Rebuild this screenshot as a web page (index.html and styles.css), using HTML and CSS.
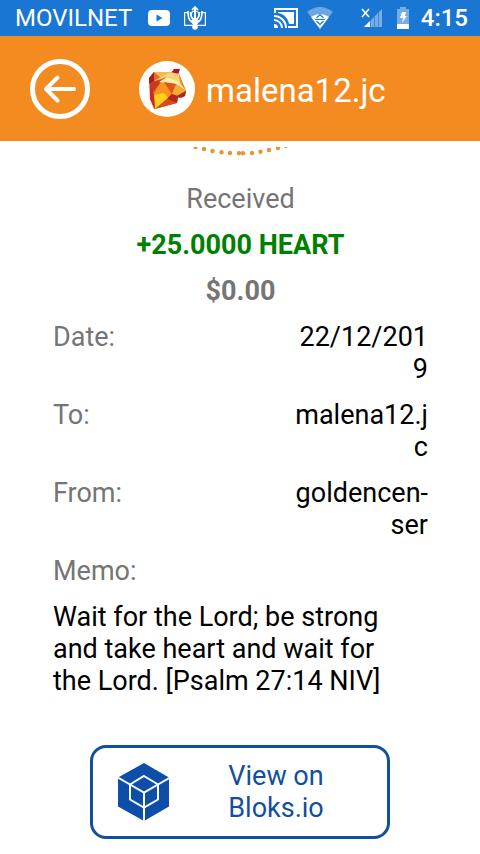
FILE: index.html
```html
<!DOCTYPE html>
<html lang="en">
<head>
<meta charset="utf-8">
<meta name="viewport" content="width=device-width, initial-scale=1">
<title>Transaction details</title>
<link rel="stylesheet" href="styles.css">
</head>
<body>
<div class="status">
  <span class="carrier">MOVILNET</span>
  <svg class="youtube" width="22" height="16" viewBox="0 0 22 16"><rect width="22" height="16" rx="4" fill="#fff"/><path d="M8.500 4.500v7l6-3.500z" fill="#1976d2"/></svg>
  <svg class="emblem" width="22" height="24" viewBox="0 0 22 24" fill="none" stroke="#fff" stroke-width="1.200"><path d="M4 6.600H.6v12.800h20.800V6.600H18"/><path d="M11 1v22" stroke-width="2"/><path d="M4 5c0 5 0 10 7 13 7-3 7-8 7-13M6.500 6c0 5 1.500 7 4.500 9 3-2 4.500-4 4.500-9M8 4l3-3 3 3" stroke-width="1.600"/><circle cx="11" cy="9" r="4"/><path d="M7 14h8l-2 5H9z" fill="#fff" stroke="none"/><circle cx="11" cy="21" r="2.200" fill="#fff"/></svg>
  <svg class="cast" width="24" height="20" viewBox="0 0 24 20" fill="none" stroke="#fff" stroke-width="2"><path d="M1 5V1h22v18H14"/><path d="M4 5V4h16v12h-5C14 10 10 6 4 5z" fill="#fff" stroke="none"/><path d="M0 8a12 12 0 0 1 12 12M0 12a8 8 0 0 1 8 8"/><path d="M0 16a4 4 0 0 1 4 4H0z" fill="#fff" stroke="none"/></svg>
  <svg class="wifi" width="26" height="22" viewBox="0 0 26 22"><path d="M0 5Q13-5 26 5L13 22z" fill="#6ba6e2"/><path d="M0 5 4 10l9 12 9-12 4-5v17H0z" fill="#1976d2"/><path d="M4 10Q13 4 22 10L13 22z" fill="#fff"/><path d="M9.500 11 13 7.500l3.500 3.500M9.500 14l3.500 3.500 3.500-3.500M8 12.500h10" fill="none" stroke="#1976d2" stroke-width="1.200"/></svg>
  <svg class="signal" width="22" height="20" viewBox="0 0 22 20"><path d="M3 19 21 1v18z" fill="#75ade5"/><path d="M3 19l6-6v6z" fill="#fff"/><path d="M9.500 12v7M13.500 8v11M17.500 4v15" stroke="#3b8ada" stroke-width="1"/><path d="m1 1 7 8M8 1 1 9" stroke="#fff" stroke-width="1.500"/></svg>
  <svg class="battery" width="12" height="22" viewBox="0 0 12 22"><path d="M3 2V0h6v2h3v20H0V2z" fill="#75ade5"/><path d="M0 17h12v5H0z" fill="#fff"/><path d="M5 5h4l-1 4h2l-5 7 1-5H3z" fill="#fff"/></svg>
  <time class="clock">4:15</time>
</div>
<header class="header">
  <button class="back" type="button" aria-label="Back"><svg width="60" height="60" viewBox="0 0 60 60" fill="none" stroke="#fff"><circle cx="30" cy="30" r="27.500" stroke-width="5"/><path d="M44 30H16M27.500 18.500 16 30l11.500 11.500" stroke-width="4" stroke-linecap="round" stroke-linejoin="round"/></svg></button>
  <svg class="avatar" width="56" height="56" viewBox="0 0 56 56"><circle cx="28" cy="28" r="28" fill="#fff"/><path d="M32 12 35 8h6l-2 6z" fill="#b80f24"/><path d="m10 17 5-6 16 0 9 2 7 17-1 5-7 2-1 5-23 6-4-10z" fill="#d9481f"/><path d="m10 17 5-6v9l-5 3z" fill="#a81e20"/><path d="m15 11 16 0-8 7-8 2z" fill="#f6b94c"/><path d="m15 20 8-2-8-7z" fill="#e06d2b"/><path d="m11 22 12-3-12 17z" fill="#c9381f"/><path d="m23 19-12 17 5 12z" fill="#ee7622"/><path d="m23 19 11 13-18 16-1-14z" fill="#f89420"/><path d="m15 34 10-2 4 5-13 11z" fill="#ffd01e"/><path d="m11 25 4 9 1 14-5-10z" fill="#c52e20"/><path d="m31 11 9 2 2 9-14-6-13 4z" fill="#fbd276"/><path d="m28 16 13 5 6 9-10-7-17-2z" fill="#fff0b0"/><path d="m40 13 7 17-6-8z" fill="#f0902a"/><path d="m25 21 12 2-4 10z" fill="#e15420"/><path d="m37 23 10 7-9 5-5-2z" fill="#f5ad30"/><path d="m33 33 6 2-1 7-10-4z" fill="#b92620"/><path d="m28 38 10 4-22 6z" fill="#d84d20"/><path d="m38 35 9-5-1 5-4 2z" fill="#a7281c"/></svg>
  <h1 class="account">malena12.jc</h1>
</header>
<main class="content">
  <svg class="dots" width="96" height="10" viewBox="0 0 96 10" fill="#e79532"><circle cx="3.500" cy="0" r="2.200"/><circle cx="12" cy="2" r="2.200"/><circle cx="20.500" cy="4" r="2.200"/><circle cx="29.500" cy="5.200" r="2.200"/><circle cx="38" cy="6" r="2.200"/><circle cx="47" cy="6.300" r="2.200"/><circle cx="51" cy="6.300" r="2.200"/><circle cx="60" cy="6" r="2.200"/><circle cx="68.500" cy="4.800" r="2.200"/><circle cx="77" cy="3" r="2.200"/><circle cx="86" cy="1" r="2.200"/><circle cx="94" cy="-1" r="2"/></svg>
  <section class="details">
    <p class="centered">Received</p>
    <p class="centered amount">+25.0000 HEART</p>
    <p class="centered fiat">$0.00</p>
    <dl class="rows">
      <div class="row"><dt>Date:</dt><dd>22/12/2019</dd></div>
      <div class="row"><dt>To:</dt><dd>malena12.jc</dd></div>
      <div class="row"><dt>From:</dt><dd class="hyphenated">goldencen&shy;ser</dd></div>
      <div class="memo"><dt>Memo:</dt><dd>Wait for the Lord; be strong and take heart and wait for the Lord. [Psalm 27:14 NIV]</dd></div>
    </dl>
  </section>
  <button class="explorer" type="button">
    <svg width="52" height="58" viewBox="0 0 52 58"><path d="M26 0 51 14.500v29L26 58 0 43.500v-29z" fill="#0d4fa8"/><path d="m0 14.500 12 7 14 8 14-8 12-7M26 29.500V58M26 13l14 8.500v15L26 44.500l-14-8v-15z" fill="none" stroke="#fff" stroke-width="2"/></svg>
    <span class="explorer-label">View on Bloks.io</span>
  </button>
</main>
</body>
</html>
```
FILE: styles.css
```css
* { box-sizing: border-box; }
body {
  margin: 0;
  background: #fff;
  color: #000;
  font: 27px/32px Roboto, sans-serif;
}
p, dl, dd, h1 { margin: 0; }
svg { display: block; flex: none; }

.status {
  display: flex;
  align-items: center;
  height: 36px;
  padding: 0 12px 0 15px;
  background: #1976d2;
  color: #fff;
  font-size: 24px;
}
.youtube { margin-left: 16px; }
.emblem { margin-left: 14px; }
.cast { margin-left: auto; }
.wifi { margin-left: 9px; }
.signal { margin-left: 28px; }
.battery { margin-left: 14px; }
.clock { margin-left: 12px; font-weight: 500; }

.header {
  display: flex;
  align-items: center;
  height: 105px;
  padding: 0 30px;
  background: #f38b20;
  color: #fff;
}
.back {
  padding: 0;
  border: 0;
  background: none;
}
.avatar { margin-left: 49px; }
.account {
  margin-left: 11px;
  padding-top: 4px;
  font-size: 33px;
  font-weight: 400;
  line-height: 40px;
}

.content {
  display: flex;
  flex-direction: column;
  align-items: center;
  padding-top: 6px;
}
.details {
  align-self: stretch;
  display: grid;
  gap: 14px;
  padding: 26px 52px 0 53px;
}
.centered {
  text-align: center;
  color: #757575;
}
.amount { color: #008000; font-weight: 700; }
.fiat { font-weight: 700; }
.rows { display: grid; gap: 14px; }
.row {
  display: flex;
  justify-content: space-between;
}
dt { color: #757575; }
.row dd {
  width: 36%;
  text-align: right;
  word-break: break-all;
}
.row .hyphenated { word-break: normal; }
.memo {
  display: grid;
  gap: 14px;
}
.memo dd { padding-right: 20px; }

.explorer {
  display: flex;
  align-items: center;
  width: 300px;
  margin: 48px 0 16px;
  padding: 12px 24px 12px 25px;
  border: 3px solid #124f9c;
  border-radius: 16px;
  background: #fff;
  color: #124f9c;
  font: inherit;
}
.explorer-label {
  width: 100px;
  margin-left: 56px;
}
```
